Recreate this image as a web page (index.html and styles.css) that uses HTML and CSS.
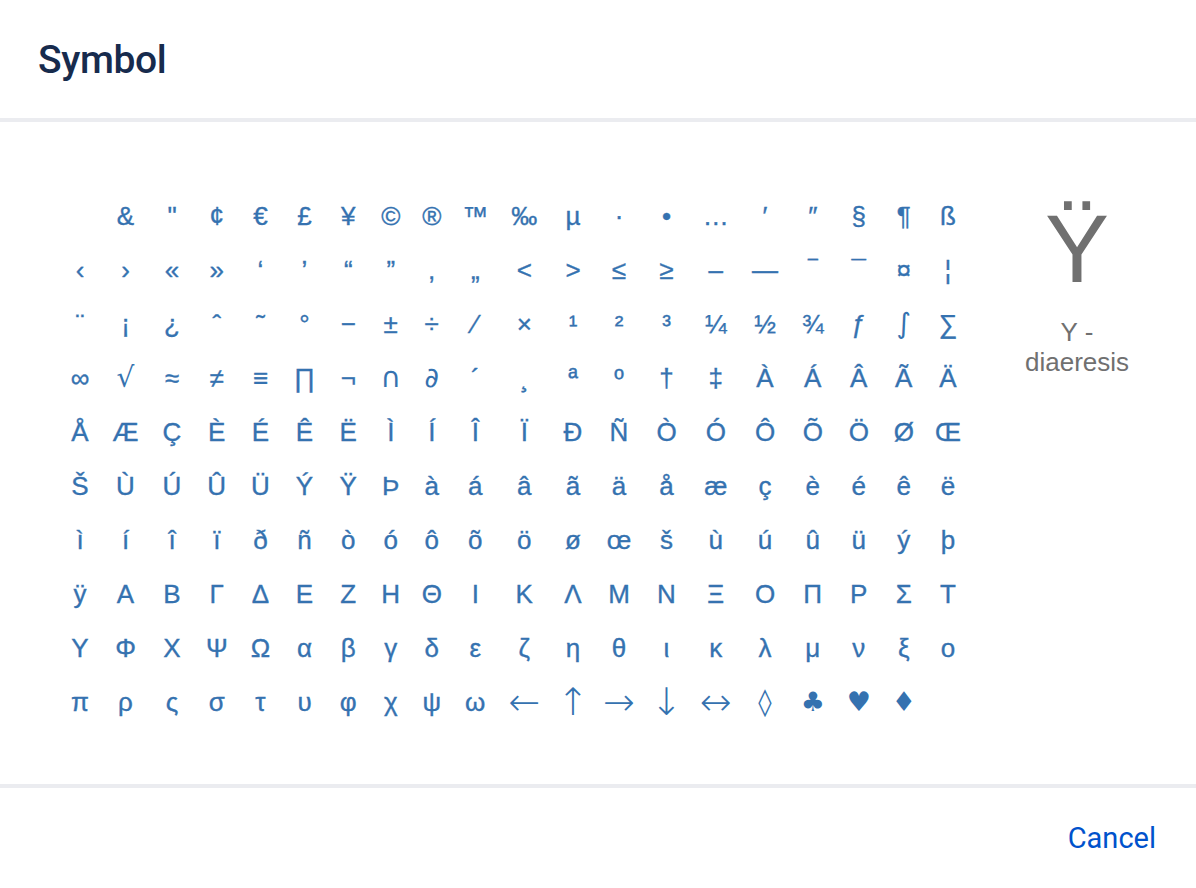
FILE: index.html
```html
<!DOCTYPE html>
<html lang="en">
<head>
<meta charset="utf-8">
<title>Symbol</title>
<link rel="stylesheet" href="styles.css">
</head>
<body>
<div class="dialog">
  <header class="dialog-header">
    <h1 class="dialog-title">Symbol</h1>
  </header>
  <main class="dialog-body">
    <div class="charmap">
      <span class="ch">&nbsp;</span><span class="ch">&amp;</span><span class="ch">"</span><span class="ch">¢</span><span class="ch">€</span><span class="ch">£</span><span class="ch">¥</span><span class="ch">©</span><span class="ch">®</span><span class="ch">™</span><span class="ch">‰</span><span class="ch">µ</span><span class="ch">·</span><span class="ch">•</span><span class="ch">…</span><span class="ch">′</span><span class="ch">″</span><span class="ch">§</span><span class="ch">¶</span><span class="ch">ß</span>
      <span class="ch">‹</span><span class="ch">›</span><span class="ch">«</span><span class="ch">»</span><span class="ch">‘</span><span class="ch">’</span><span class="ch">“</span><span class="ch">”</span><span class="ch">‚</span><span class="ch">„</span><span class="ch">&lt;</span><span class="ch">&gt;</span><span class="ch">≤</span><span class="ch">≥</span><span class="ch">–</span><span class="ch">—</span><span class="ch">‾</span><span class="ch">¯</span><span class="ch">¤</span><span class="ch">¦</span>
      <span class="ch">¨</span><span class="ch">¡</span><span class="ch">¿</span><span class="ch">ˆ</span><span class="ch">˜</span><span class="ch">°</span><span class="ch">−</span><span class="ch">±</span><span class="ch">÷</span><span class="ch">⁄</span><span class="ch">×</span><span class="ch">¹</span><span class="ch">²</span><span class="ch">³</span><span class="ch">¼</span><span class="ch">½</span><span class="ch">¾</span><span class="ch">ƒ</span><span class="ch math">∫</span><span class="ch">∑</span>
      <span class="ch">∞</span><span class="ch math">√</span><span class="ch">≈</span><span class="ch">≠</span><span class="ch">≡</span><span class="ch">∏</span><span class="ch">¬</span><span class="ch math">∩</span><span class="ch math">∂</span><span class="ch">´</span><span class="ch">¸</span><span class="ch">ª</span><span class="ch">º</span><span class="ch">†</span><span class="ch">‡</span><span class="ch">À</span><span class="ch">Á</span><span class="ch">Â</span><span class="ch">Ã</span><span class="ch">Ä</span>
      <span class="ch">Å</span><span class="ch">Æ</span><span class="ch">Ç</span><span class="ch">È</span><span class="ch">É</span><span class="ch">Ê</span><span class="ch">Ë</span><span class="ch">Ì</span><span class="ch">Í</span><span class="ch">Î</span><span class="ch">Ï</span><span class="ch">Ð</span><span class="ch">Ñ</span><span class="ch">Ò</span><span class="ch">Ó</span><span class="ch">Ô</span><span class="ch">Õ</span><span class="ch">Ö</span><span class="ch">Ø</span><span class="ch">Œ</span>
      <span class="ch">Š</span><span class="ch">Ù</span><span class="ch">Ú</span><span class="ch">Û</span><span class="ch">Ü</span><span class="ch">Ý</span><span class="ch">Ÿ</span><span class="ch">Þ</span><span class="ch">à</span><span class="ch">á</span><span class="ch">â</span><span class="ch">ã</span><span class="ch">ä</span><span class="ch">å</span><span class="ch">æ</span><span class="ch">ç</span><span class="ch">è</span><span class="ch">é</span><span class="ch">ê</span><span class="ch">ë</span>
      <span class="ch">ì</span><span class="ch">í</span><span class="ch">î</span><span class="ch">ï</span><span class="ch">ð</span><span class="ch">ñ</span><span class="ch">ò</span><span class="ch">ó</span><span class="ch">ô</span><span class="ch">õ</span><span class="ch">ö</span><span class="ch">ø</span><span class="ch">œ</span><span class="ch">š</span><span class="ch">ù</span><span class="ch">ú</span><span class="ch">û</span><span class="ch">ü</span><span class="ch">ý</span><span class="ch">þ</span>
      <span class="ch">ÿ</span><span class="ch">Α</span><span class="ch">Β</span><span class="ch">Γ</span><span class="ch">Δ</span><span class="ch">Ε</span><span class="ch">Ζ</span><span class="ch">Η</span><span class="ch">Θ</span><span class="ch">Ι</span><span class="ch">Κ</span><span class="ch">Λ</span><span class="ch">Μ</span><span class="ch">Ν</span><span class="ch">Ξ</span><span class="ch">Ο</span><span class="ch">Π</span><span class="ch">Ρ</span><span class="ch">Σ</span><span class="ch">Τ</span>
      <span class="ch">Υ</span><span class="ch">Φ</span><span class="ch">Χ</span><span class="ch">Ψ</span><span class="ch">Ω</span><span class="ch">α</span><span class="ch">β</span><span class="ch">γ</span><span class="ch">δ</span><span class="ch">ε</span><span class="ch">ζ</span><span class="ch">η</span><span class="ch">θ</span><span class="ch">ι</span><span class="ch">κ</span><span class="ch">λ</span><span class="ch">μ</span><span class="ch">ν</span><span class="ch">ξ</span><span class="ch">ο</span>
      <span class="ch">π</span><span class="ch">ρ</span><span class="ch">ς</span><span class="ch">σ</span><span class="ch">τ</span><span class="ch">υ</span><span class="ch">φ</span><span class="ch">χ</span><span class="ch">ψ</span><span class="ch">ω</span><span class="ch arrow">←</span><span class="ch arrow">↑</span><span class="ch arrow">→</span><span class="ch arrow">↓</span><span class="ch arrow">↔</span><span class="ch suit">◊</span><span class="ch suit">♣</span><span class="ch suit">♥</span><span class="ch suit">♦</span>
    </div>
    <aside class="preview">
      <div class="preview-char">Ÿ</div>
      <div class="preview-name">Y - diaeresis</div>
    </aside>
  </main>
  <footer class="dialog-footer">
    <button class="btn-link" type="button">Cancel</button>
  </footer>
</div>
</body>
</html>
```

FILE: styles.css
```css
html, body {
  margin: 0;
  padding: 0;
  background: #ffffff;
}

body {
  font-family: "Liberation Sans", Arial, sans-serif;
}

.dialog {
  width: 1196px;
  height: 888px;
  display: flex;
  flex-direction: column;
  background: #ffffff;
}

.dialog-header {
  flex: none;
  box-sizing: border-box;
  height: 122px;
  padding: 2px 0 0 38px;
  display: flex;
  align-items: center;
  border-bottom: 4px solid #EBECF0;
}

.dialog-title {
  margin: 0;
  font-family: Roboto, "Liberation Sans", sans-serif;
  font-weight: 500;
  font-size: 39px;
  line-height: 44px;
  color: #172B4D;
  letter-spacing: -0.4px;
}

.dialog-body {
  flex: 1;
  display: flex;
  justify-content: space-between;
  align-items: flex-start;
  padding: 67px 54px 0 58px;
  box-sizing: border-box;
  border-bottom: 4px solid #EBECF0;
}

.charmap {
  display: grid;
  grid-template-columns: 44px 47px 46px 43.5px 44px 44px 43.5px 41.5px 40.5px 46.5px 51.5px 46px 46px 49px 49.5px 49px 46.5px 45.5px 44.5px 44px;
  grid-auto-rows: 54px;
  font-family: "Liberation Sans", Arial, sans-serif;
  font-size: 26px;
  color: #3572B0;
  -webkit-text-stroke: 0.35px #3572B0;
}

.ch {
  display: block;
  text-align: center;
  line-height: 54px;
  white-space: nowrap;
  cursor: pointer;
}

.math {
  font-family: "DejaVu Sans", sans-serif;
  font-size: 28px;
  -webkit-text-stroke: 0;
}

.arrow {
  font-family: "DejaVu Sans", sans-serif;
  font-weight: 200;
  font-size: 38px;
  -webkit-text-stroke: 0;
}

.suit {
  font-family: "DejaVu Sans", sans-serif;
  font-size: 27px;
  -webkit-text-stroke: 0;
}

.preview {
  width: 130px;
  margin-top: 10px;
  text-align: center;
  color: #707070;
}

.preview-char {
  font-size: 96px;
  line-height: 100px;
}

.preview-name {
  margin-top: 18px;
  font-size: 26px;
  line-height: 30px;
}

.dialog-footer {
  height: 100px;
  flex: none;
  display: flex;
  align-items: center;
  justify-content: flex-end;
  padding-right: 40px;
}

.btn-link {
  border: 0;
  background: none;
  padding: 0;
  margin: 0;
  font-family: Roboto, "Liberation Sans", sans-serif;
  font-size: 29px;
  line-height: 34px;
  color: #0052CC;
  cursor: pointer;
}
```
